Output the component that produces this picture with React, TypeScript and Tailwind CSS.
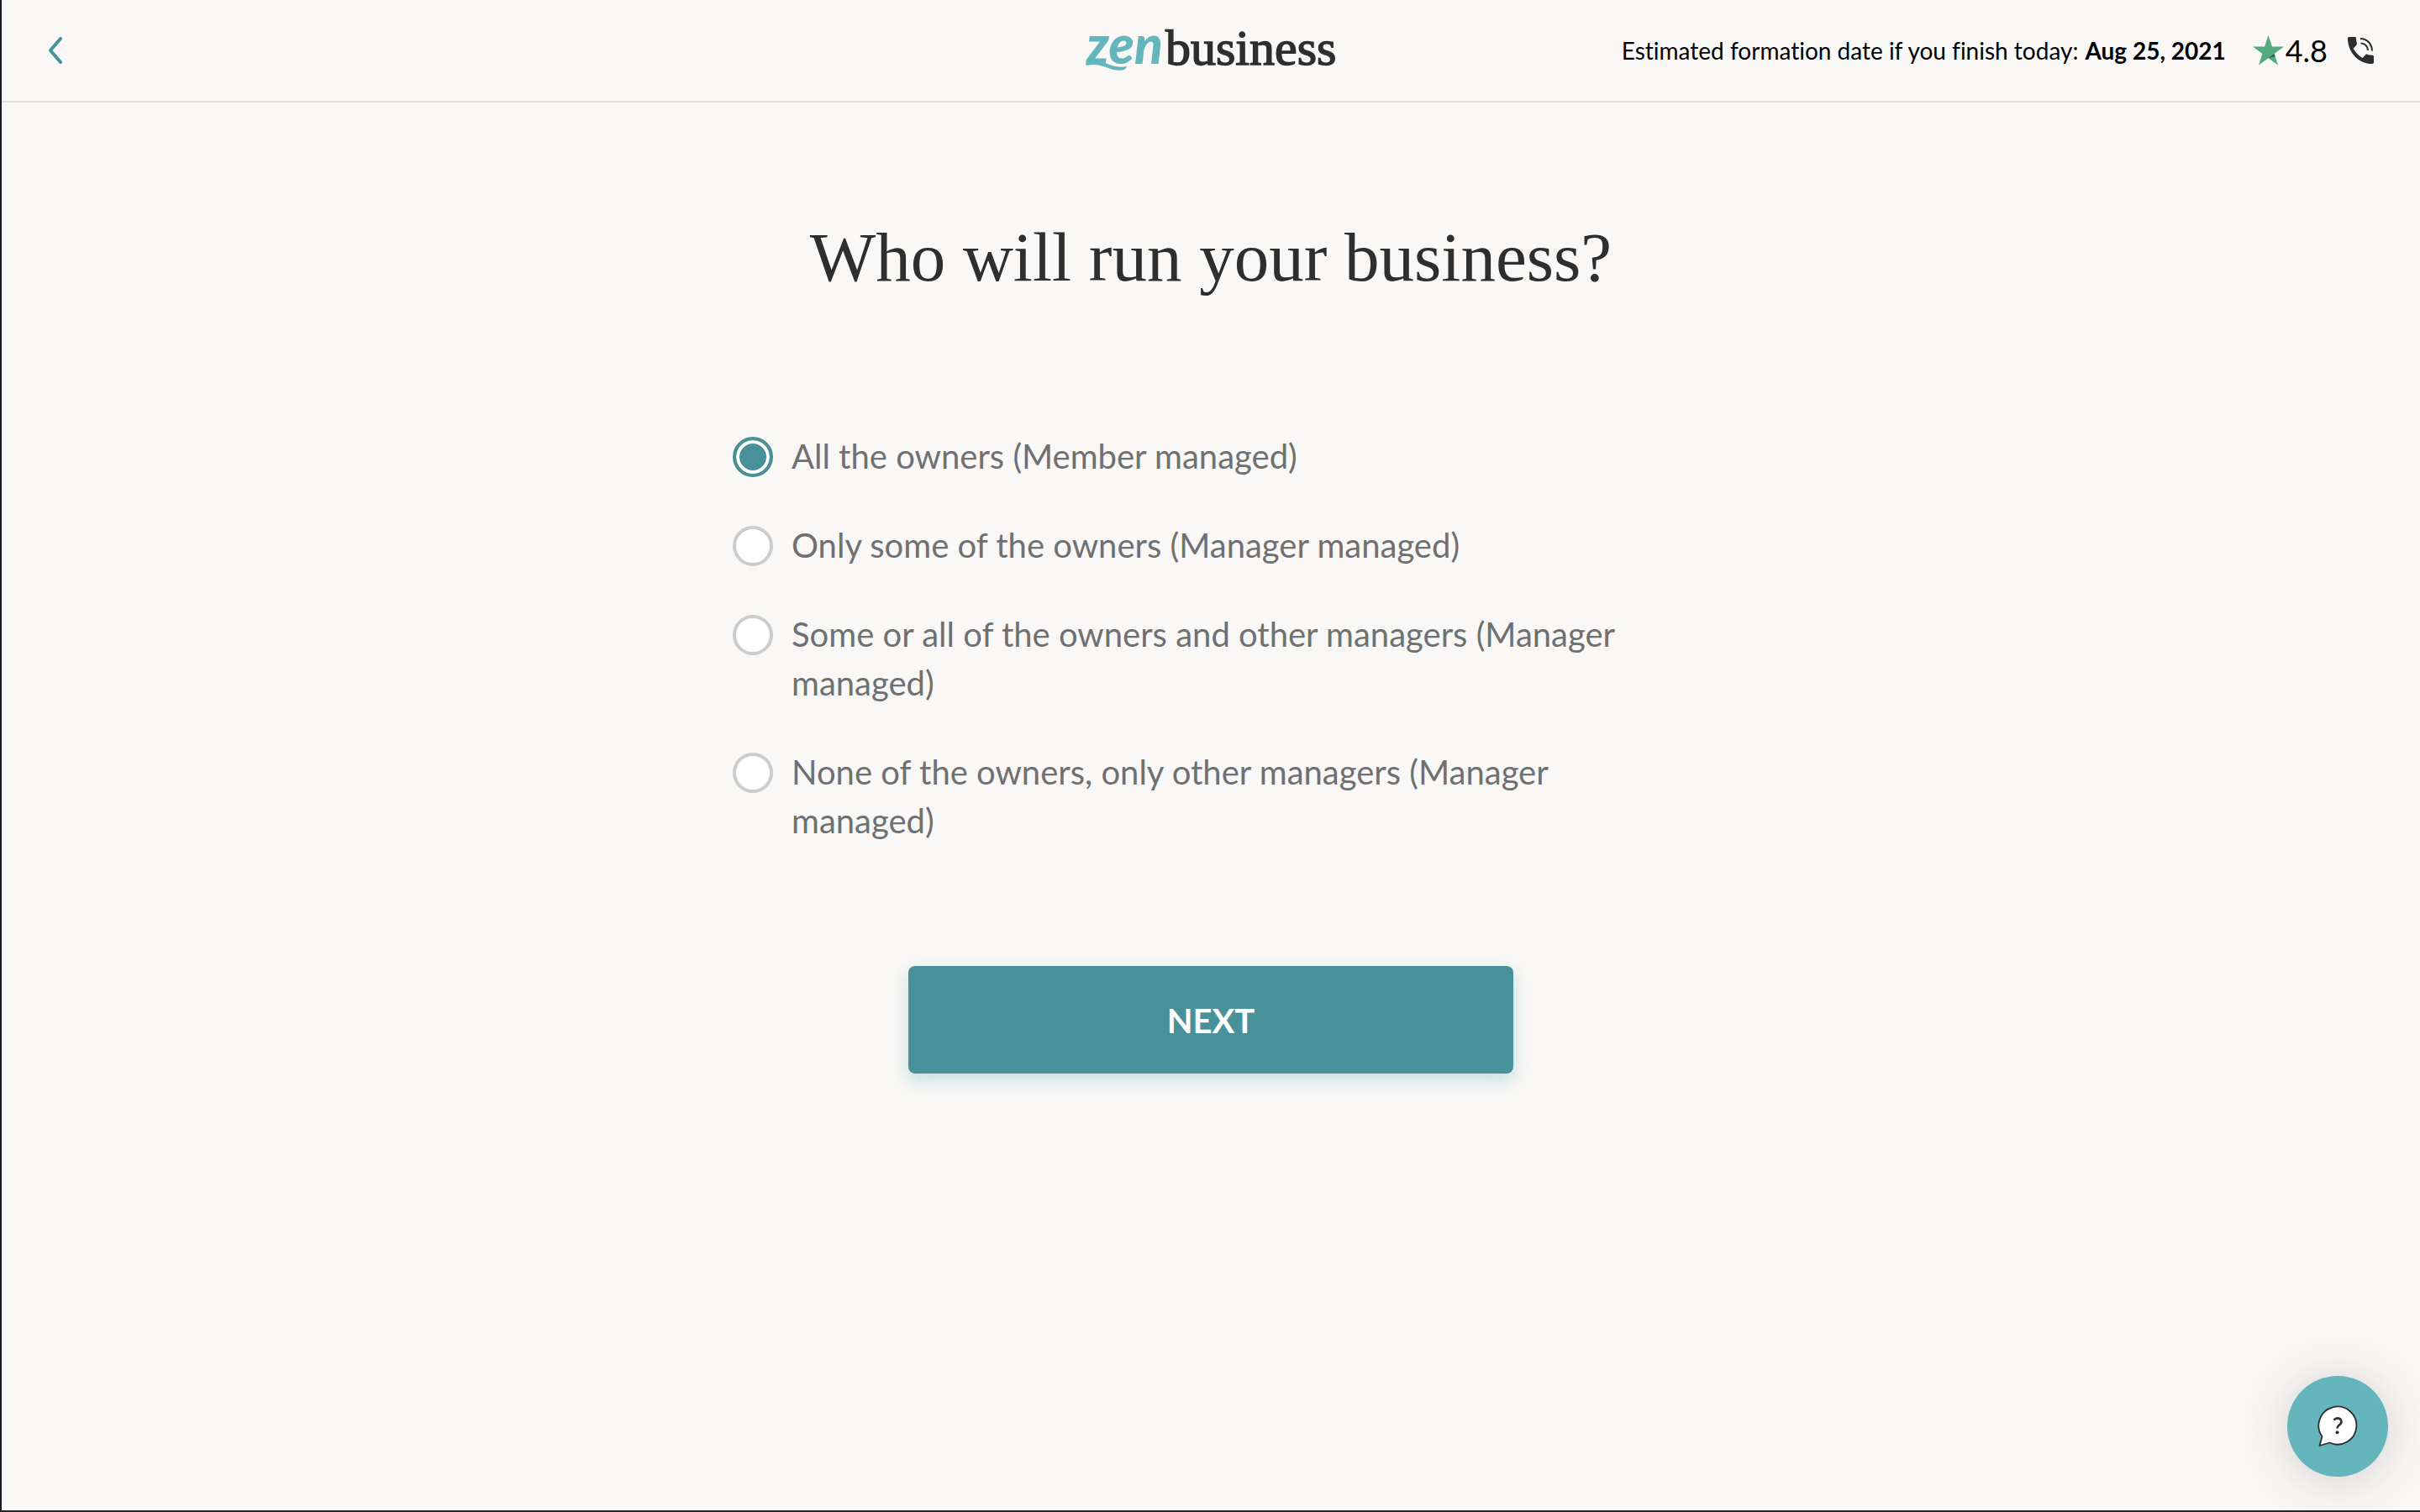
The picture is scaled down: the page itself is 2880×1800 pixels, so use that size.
import { useState } from "react";

const options = [
  { id: "all-owners", label: "All the owners (Member managed)" },
  { id: "some-owners", label: "Only some of the owners (Manager managed)" },
  { id: "owners-and-others", label: "Some or all of the owners and other managers (Manager managed)" },
  { id: "only-others", label: "None of the owners, only other managers (Manager managed)" },
];

function BackIcon() {
  return (
    <svg viewBox="0 0 16 32" className="h-8 w-4" fill="none" stroke="currentColor" strokeWidth="4" strokeLinecap="round" strokeLinejoin="round" aria-hidden="true">
      <path d="M14 2 2 16l12 14" />
    </svg>
  );
}

function Logo() {
  return (
    <svg viewBox="0 0 304 88" className="h-[88px] w-[304px]" role="img" aria-label="zenbusiness">
      <text x="3" y="60" fontSize="62" fontWeight="900" fontStyle="italic" fill="#65b5bc" fontFamily="Lato, sans-serif">
        zen
      </text>
      <path d="M2 60C8 54 16 56 23 58C33 62 40 65 51 63C50 69 38 69 29 65C19 61 11 60 3 62Z" fill="#65b5bc" />
      <text x="97" y="61" fontSize="60" fill="#2e2e2e" stroke="#2e2e2e" strokeWidth="1.500" fontFamily="'Liberation Serif', serif">
        business
      </text>
    </svg>
  );
}

function StarIcon() {
  return (
    <svg viewBox="0 0 37 36" className="h-9 w-[37px]" aria-hidden="true">
      <path d="M18.500 0 23 13.500H37L25.600 22 30 35.500 18.500 27.200 7 35.500 11.400 22 0 13.500H14Z" fill="#55ab80" />
      <path d="M25.600 22 26.600 25 18.500 27.200Z" fill="#2f5f49" />
    </svg>
  );
}

function PhoneIcon() {
  return (
    <svg viewBox="0 0 31 32" className="h-8 w-[31px]" aria-hidden="true">
      <path
        d="M1.500 0H8.500C9.500 0 10 .6 10 1.500C10 3.800 10.300 5.800 10.900 7.600C11.100 8.300 11 8.900 10.500 9.400L6.600 13.800C9.100 18.500 12.800 22.300 17.500 24.900L21.300 21.100C21.800 20.600 22.400 20.500 23 20.700C25 21.400 27 21.700 29.300 21.700C30.300 21.700 31 22.300 31 23.300V30.300C31 31.300 30.300 32 29.300 32C13 32 0 18.500 0 1.700C0 .7.600 0 1.500 0Z"
        fill="#2e2e2e"
      />
      <path d="M15 2C23 2 29 8.500 29 16.500M15.500 7.500C20.500 7.500 24 11.500 24 16" fill="none" stroke="#2e2e2e" strokeWidth="2" />
    </svg>
  );
}

function HelpIcon() {
  return (
    <svg viewBox="0 0 48 50" className="h-[50px] w-12" aria-hidden="true">
      <path d="M5.500 37A22.500 22.500 0 1 1 14.500 44.500L2.500 48Z" fill="#fff" stroke="#2e2e2e" strokeWidth="1.800" strokeLinejoin="round" />
      <path d="M19.500 17.500C20.800 15.800 22.500 15.200 24.400 15.400C29 15.800 29.500 20.500 26.500 23C24.300 24.800 23.500 25 23.500 27.500" fill="none" stroke="#2e2e2e" strokeWidth="2.600" />
      <circle cx="23.500" cy="32.300" r="2" fill="#2e2e2e" />
    </svg>
  );
}

export default function App() {
  const [selected, setSelected] = useState("all-owners");

  return (
    <div className="flex min-h-screen flex-col border-b-2 border-l-2 border-b-[#26262c] border-l-[#1a1a24] bg-[#f9f8f6] font-['Lato',sans-serif]">
      <header className="grid grid-cols-[1fr_auto_1fr] items-center border-b-2 border-[#e0dfdd] py-4 pr-[55px] pl-14">
        <button type="button" aria-label="Back" className="justify-self-start text-[#48919a]">
          <BackIcon />
        </button>
        <Logo />
        <div className="flex items-center justify-end text-[28px] leading-9 text-black">
          <p className="flex gap-2 [font-variant-ligatures:no-common-ligatures]">
            <span>Estimated formation date if you finish today:</span>
            <strong className="font-bold">Aug 25, 2021</strong>
          </p>
          <div className="ml-8 flex items-center gap-0.5 text-[36px]">
            <StarIcon />
            <span>4.8</span>
          </div>
          <a href="#call" aria-label="Call us" className="ml-6">
            <PhoneIcon />
          </a>
        </div>
      </header>

      <main className="mx-auto flex w-full max-w-[1138px] flex-col">
        <h1 id="question" className="mt-32 text-center font-['Liberation_Serif',serif] text-[83px] leading-[112px] text-[#2e2e2e]">
          Who will run your business?
        </h1>
        <form className="mt-[152px] flex flex-col" onSubmit={(e) => e.preventDefault()}>
          <div role="radiogroup" aria-labelledby="question" className="flex flex-col gap-12">
            {options.map((o) => (
              <div key={o.id} className="flex items-start gap-[22px]">
                <input
                  type="radio"
                  id={o.id}
                  name="management"
                  checked={selected === o.id}
                  onChange={() => setSelected(o.id)}
                  className="mt-1.5 size-12 shrink-0 appearance-none rounded-full border-4 border-[#cccccc] bg-white checked:border-[#48919a] checked:bg-[#48919a] checked:shadow-[inset_0_0_0_4px_#fff]"
                />
                <label htmlFor={o.id} className="text-[40px] leading-[58px] text-[#6e7072]">
                  {o.label}
                </label>
              </div>
            ))}
          </div>
          <button
            type="submit"
            className="mt-36 h-32 w-full max-w-[720px] self-center rounded-lg bg-[#48919a] pt-0.5 text-[40px] font-bold text-white shadow-[0_8px_20px_rgba(72,160,165,0.3)]"
          >
            NEXT
          </button>
        </form>
      </main>

      <button
        type="button"
        aria-label="Help"
        className="fixed right-[38px] bottom-[42px] flex size-[120px] items-center justify-center rounded-full bg-[#65b5bc] shadow-[0_4px_60px_rgba(46,46,46,0.2)]"
      >
        <HelpIcon />
      </button>
    </div>
  );
}
